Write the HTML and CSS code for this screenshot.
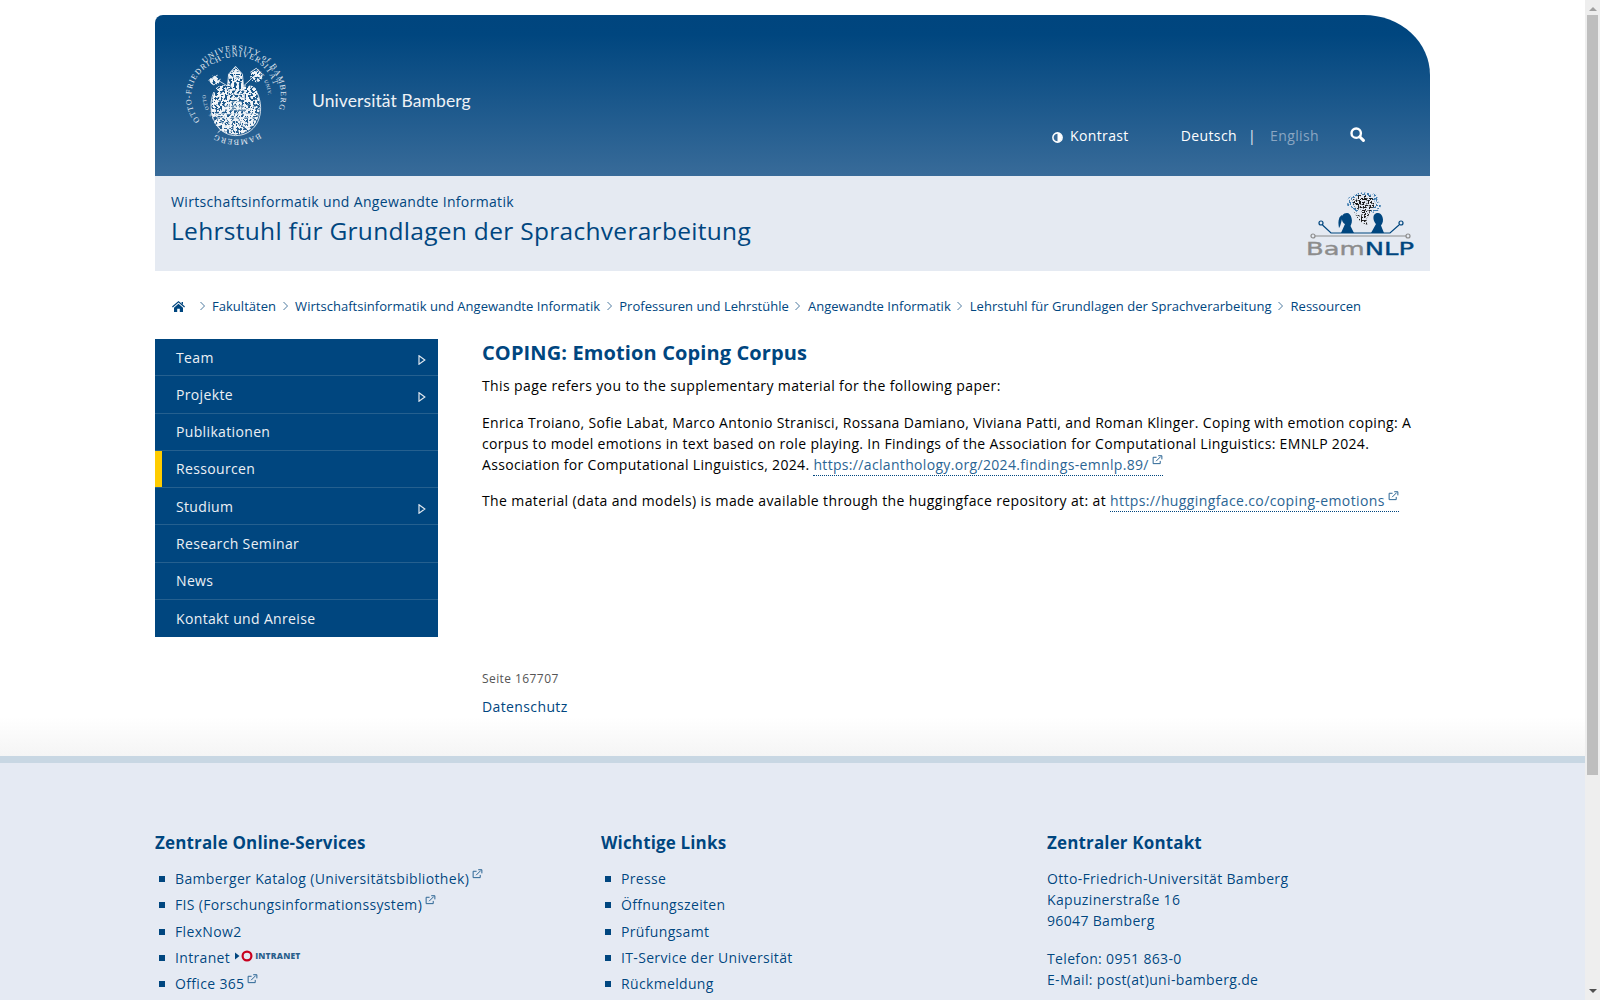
FILE: index.html
```html
<!DOCTYPE html>
<html lang="de">
<head>
<meta charset="utf-8">
<title>COPING: Emotion Coping Corpus</title>
<link rel="stylesheet" href="styles.css">
</head>
<body>
<svg class="defs" width="0" height="0" aria-hidden="true">
  <defs>
    <filter id="engrave" x="0" y="0" width="100%" height="100%">
      <feTurbulence type="fractalNoise" baseFrequency=".42" numOctaves="2" seed="4" result="n"/>
      <feColorMatrix in="n" type="matrix" values="0 0 0 0 0  0 0 0 0 0  0 0 0 0 0  0 0 0 -14 7.800" result="m"/>
      <feComposite in="SourceGraphic" in2="m" operator="in"/>
    </filter>
    <filter id="speckle" x="0" y="0" width="100%" height="100%">
      <feTurbulence type="fractalNoise" baseFrequency=".6" numOctaves="1" seed="9" result="n"/>
      <feColorMatrix in="n" type="matrix" values="0 0 0 0 0  0 0 0 0 0  0 0 0 0 0  0 0 0 -16 8" result="m"/>
      <feComposite in="SourceGraphic" in2="m" operator="in"/>
    </filter>
  </defs>
  <symbol id="ext" viewBox="0 0 12 11">
    <path d="M9 6.500V9.500H1.200V2.500H5" fill="none" stroke="currentColor" stroke-width="1.100"/>
    <path d="M4.500 6.800 9.600 1.700M6.800 .8H10.800V4.800" fill="none" stroke="currentColor" stroke-width="1.100"/>
  </symbol>
  <symbol id="chev" viewBox="0 0 7 10">
    <path d="M1.500 1 5.500 5 1.500 9" fill="none" stroke="currentColor" stroke-width="1"/>
  </symbol>
  <symbol id="tri" viewBox="0 0 8 10">
    <path d="M1 .8 6.800 5 1 9.200Z" fill="none" stroke="currentColor" stroke-width="1.200"/>
  </symbol>
</svg>
<div class="viewport">
  <div class="page">
    <div class="wrap">
      <header class="masthead">
        <a class="brand" href="#">
          <svg class="seal" viewBox="0 0 102 102" role="img" aria-label="Siegel">
            <defs>
              <path id="ringUni" d="M19.200 19.200A45 45 0 0 1 85.500 79.900"/>
              <path id="ringOtto" d="M14.100 76.800A36 36 0 0 1 32 18.100A37 37 0 0 1 83 69.500"/>
              <path id="ringBam" d="M76.800 87.900A45 45 0 0 1 25.200 87.900"/>
              <path id="ringSotto" d="M27 71A31 31 0 0 1 24 36"/>
              <path id="ringPat" d="M70 27A30 30 0 0 1 79 66"/>
            </defs>
            <text class="seal-t"><textPath href="#ringUni">UNIVERSITY of BAMBERG</textPath></text>
            <text class="seal-t seal-t2"><textPath href="#ringOtto">OTTO-FRIEDRICH-UNIVERSITÄT</textPath></text>
            <text class="seal-t"><textPath href="#ringBam" startOffset="6%">BAMBERG</textPath></text>
            <text class="seal-s"><textPath href="#ringSotto">S. OTTO</textPath></text>
            <text class="seal-s"><textPath href="#ringPat">PAT. UNIV.</textPath></text>
            <g transform="translate(-1 4)">
              <g class="arms-fill" filter="url(#engrave)">
                <path d="M30 44C30 37 40 36 43 38L44 26 51 19 58 26 59 38C64 36 74 38 73 46 77 54 76 66 72 74 67 83 58 87 51 87 42 87 33 83 29 74 25 65 26 52 30 44Z"/>
                <circle cx="30" cy="32" r="5"/><circle cx="72" cy="28" r="6"/>
              </g>
              <g class="arms-line">
                <path d="M43 38 44 26 51 18 58 26 59 38M45 29H57M47 24 55 24"/>
                <path d="M43 38 30 30M59 38 72 26M33 27 24 32 29 37 36 31M66 24 72 20 78 26 73 33"/>
                <path d="M29 44C24 56 26 70 33 79 39 86 46 88 51 88 60 88 68 84 73 75 78 65 77 54 73 45"/>
                <path d="M30 66H74M32 70H72M51 70V87M33 71 50 86M50 71 33 85M39 70 50 80"/>
                <path d="M55 75Q58 72 61 75T67 75T72 73M54 79Q57 76 60 79T66 79T70 78"/>
                <path d="M44 42H60V60H44ZM47 46H57M47 50H57M47 54H57M40 58 64 58M38 62H66"/>
              </g>
            </g>
          </svg>
          <span class="brand-name">Universität Bamberg</span>
        </a>
        <nav class="tools">
          <a class="kontrast" href="#">
            <svg class="contrast-icon" viewBox="0 0 10 10"><circle cx="5" cy="5" r="4.200" fill="#386b99" stroke="#fff" stroke-width="1.400"/><path d="M5 1A4 4 0 0 1 5 9Z" fill="#fff"/></svg>
            Kontrast
          </a>
          <a class="lang" href="#">Deutsch</a>
          <span class="sep">|</span>
          <a class="lang lang-off" href="#">English</a>
          <svg class="search" viewBox="0 0 15 15"><circle cx="6.200" cy="6.200" r="4.700" fill="none" stroke="#fff" stroke-width="2.400"/><path d="M9.700 9.700 13.400 13.400" stroke="#fff" stroke-width="3" stroke-linecap="round"/></svg>
        </nav>
      </header>

      <div class="subhead">
        <div>
          <div class="faculty">Wirtschaftsinformatik und Angewandte Informatik</div>
          <div class="chair">Lehrstuhl für Grundlagen der Sprachverarbeitung</div>
        </div>
        <svg class="bamnlp" viewBox="0 0 106 63" role="img" aria-label="BamNLP">
          <g filter="url(#speckle)">
            <path class="cloud-blue" d="M40 6 52 0 68 2 73 14 68 22 60 18 47 20 39 14Z"/>
            <path class="cloud-dark" d="M44 8 52 2 64 5 67 13 62 20 58 30 52 30 54 20 47 16Z"/>
            <path class="cloud-dark" d="M46 20 52 24 60 32 57 33 50 27Z"/>
          </g>
          <g class="kid">
            <path d="M39 21C35 21 33 24 34 28 34.500 30 35.500 31.500 37 32L33 41H46L42.500 34C43.500 32 44.500 29 43.500 26 43 23 41 21 39 21Z"/>
            <path d="M34 23C30 25 30 31 31 36 32 35 33 31 34 27Z"/>
            <path d="M70 21C66.500 21 65 23.500 65.500 27 66 29.500 67 31 68 32L63 41H76L73 33.500C75 31 75.500 28 74.500 25 73.500 22.500 72 21 70 21Z"/>
          </g>
          <g class="trace">
            <path d="M14.500 33 23 41H82L91 33"/>
            <circle cx="13" cy="31" r="2"/><circle cx="93" cy="31" r="2"/>
          </g>
          <g class="gray-line">
            <path d="M7 44H98"/>
            <circle cx="5" cy="44" r="2"/><circle cx="100" cy="44" r="2"/>
          </g>
          <text class="logo-t" x="-2" y="62.500" textLength="108" lengthAdjust="spacingAndGlyphs"><tspan class="logo-bam">Bam</tspan><tspan class="logo-nlp">NLP</tspan></text>
        </svg>
      </div>

      <nav class="crumbs">
        <svg class="home" viewBox="0 0 13 11"><path d="M6.500 0 13 5.600 12.200 6.500 6.500 1.600.8 6.500 0 5.600ZM2 6.700 6.500 2.800 11 6.700V11H7.800V7.800H5.200V11H2ZM9.600 1H11V3.400L9.600 2.200Z" fill="currentColor"/></svg>
        <svg class="chev chev-first"><use href="#chev"/></svg><a href="#">Fakultäten</a>
        <svg class="chev"><use href="#chev"/></svg><a href="#">Wirtschaftsinformatik und Angewandte Informatik</a>
        <svg class="chev"><use href="#chev"/></svg><a href="#">Professuren und Lehrstühle</a>
        <svg class="chev"><use href="#chev"/></svg><a href="#">Angewandte Informatik</a>
        <svg class="chev"><use href="#chev"/></svg><a href="#">Lehrstuhl für Grundlagen der Sprachverarbeitung</a>
        <svg class="chev"><use href="#chev"/></svg><a href="#">Ressourcen</a>
      </nav>

      <div class="columns">
        <nav class="menu">
          <a href="#">Team<svg class="tri"><use href="#tri"/></svg></a>
          <a href="#">Projekte<svg class="tri"><use href="#tri"/></svg></a>
          <a href="#">Publikationen</a>
          <a class="current" href="#">Ressourcen</a>
          <a href="#">Studium<svg class="tri"><use href="#tri"/></svg></a>
          <a href="#">Research Seminar</a>
          <a href="#">News</a>
          <a href="#">Kontakt und Anreise</a>
        </nav>
        <main class="content">
          <h1>COPING: Emotion Coping Corpus</h1>
          <p>This page refers you to the supplementary material for the following paper:</p>
          <p class="citation">Enrica Troiano, Sofie Labat, Marco Antonio Stranisci, Rossana Damiano, Viviana Patti, and Roman Klinger. Coping with emotion coping: A corpus to model emotions in text based on role playing. In Findings of the Association for Computational Linguistics: EMNLP 2024. Association for Computational Linguistics, 2024. <a class="ext-link" href="#">https://aclanthology.org/2024.findings-emnlp.89/<svg class="ext"><use href="#ext"/></svg></a></p>
          <p>The material (data and models) is made available through the huggingface repository at: at <a class="ext-link" href="#">https://huggingface.co/coping-emotions<svg class="ext"><use href="#ext"/></svg></a></p>
          <div class="page-id">Seite 167707</div>
          <a class="privacy" href="#">Datenschutz</a>
        </main>
      </div>
    </div>

    <div class="fade"></div>
    <footer class="footer">
      <div class="footer-grid">
        <section>
          <h2>Zentrale Online-Services</h2>
          <ul>
            <li><a href="#">Bamberger Katalog (Universitätsbibliothek)<svg class="ext"><use href="#ext"/></svg></a></li>
            <li><a href="#">FIS (Forschungsinformationssystem)<svg class="ext"><use href="#ext"/></svg></a></li>
            <li><a href="#">FlexNow2</a></li>
            <li><a href="#">Intranet<span class="intranet"><svg class="intranet-mark" viewBox="0 0 18 12"><path d="M0 2.500 4.500 6 0 9.500Z" fill="#00467f"/><circle cx="12" cy="6" r="4.400" fill="none" stroke="#c8001e" stroke-width="2.200"/></svg><span class="intranet-word">INTRANET</span></span></a></li>
            <li><a href="#">Office 365<svg class="ext"><use href="#ext"/></svg></a></li>
          </ul>
        </section>
        <section>
          <h2>Wichtige Links</h2>
          <ul>
            <li><a href="#">Presse</a></li>
            <li><a href="#">Öffnungszeiten</a></li>
            <li><a href="#">Prüfungsamt</a></li>
            <li><a href="#">IT-Service der Universität</a></li>
            <li><a href="#">Rückmeldung</a></li>
          </ul>
        </section>
        <section>
          <h2>Zentraler Kontakt</h2>
          <p>Otto-Friedrich-Universität Bamberg<br>Kapuzinerstraße 16<br>96047 Bamberg</p>
          <p>Telefon: 0951 863-0<br>E-Mail: post(at)uni-bamberg.de</p>
        </section>
      </div>
    </footer>
  </div>

  <aside class="scrollbar" aria-hidden="true">
    <span class="arrow-up"></span>
    <span class="thumb"></span>
    <span class="arrow-down"></span>
  </aside>
</div>
</body>
</html>
```
FILE: styles.css
```css
* { box-sizing: border-box; }
html, body { margin: 0; height: 100%; overflow: hidden; }
body {
  font-family: "Open Sans", "Liberation Sans", sans-serif;
  font-size: 14px;
  line-height: 21px;
  letter-spacing: .38px;
  color: #000;
  background: #fff;
}
a { color: #00467f; text-decoration: none; }
.defs { position: absolute; }

.viewport { display: flex; height: 100vh; }
.page { flex: 1; min-width: 0; overflow: hidden; }
.wrap { width: 1275px; margin: 0 auto; padding-top: 15px; }

/* masthead */
.masthead {
  height: 161px;
  display: flex;
  justify-content: space-between;
  background: linear-gradient(#00457e 0, #00467f 12%, #386b99 100%);
  border-radius: 8px 66px 0 0 / 8px 60px 0 0;
  padding: 29px 65px 0 31px;
}
.brand { display: flex; align-items: center; align-self: flex-start; gap: 25px; }
.seal { width: 101px; height: 102px; display: block; overflow: visible; }
.seal-t { font: 8px "Liberation Serif", serif; letter-spacing: 1.100px; fill: #e8eef4; }
.seal-t2 { letter-spacing: .9px; }
.seal-s { font: 5px "Liberation Serif", serif; letter-spacing: .5px; fill: #e8eef4; }
.arms-fill { fill: #f2f5f8; }
.arms-line { fill: none; stroke: #e8eef4; stroke-width: .9; }
.brand-name {
  font-family: Lato, "Open Sans", sans-serif;
  font-size: 17.500px;
  letter-spacing: .1px;
  color: #eef2f6;
  padding-top: 10px;
}
.tools { display: flex; align-items: center; align-self: flex-start; margin-top: 81px; color: #fff; }
.tools a { color: #fff; }
.kontrast { display: flex; align-items: center; gap: 7px; margin-right: 52px; }
.contrast-icon { width: 11px; height: 11px; margin-top: 3px; }
.sep { margin: 0 14px 0 11px; color: #e8eef4; }
.tools .lang-off { color: #8aa6c2; }
.search { width: 15px; height: 15px; margin-left: 31px; margin-top: -2px; }

/* sub header */
.subhead {
  height: 95px;
  display: flex;
  justify-content: space-between;
  background: #e5eaf2;
  padding: 15px 16px 0;
  color: #00467f;
}
.faculty { line-height: 22px; letter-spacing: .34px; }
.chair { font-size: 24.500px; line-height: 36px; letter-spacing: .3px; }
.bamnlp { width: 106px; height: 63px; margin-top: 1px; overflow: visible; }
.cloud-blue { fill: #3f7db0; }
.cloud-dark { fill: #1e1e1e; }
.kid { fill: #00467f; }
.trace { fill: none; stroke: #00467f; stroke-width: 1.200; }
.gray-line { fill: none; stroke: #8c8c8c; stroke-width: 1.200; }
.logo-t { font: 400 18px "DejaVu Sans", sans-serif; letter-spacing: 0; stroke-width: .35; }
.logo-bam { fill: #8c8c8c; stroke: #8c8c8c; }
.logo-nlp { fill: #00467f; stroke: #00467f; }

/* breadcrumbs */
.crumbs {
  display: flex;
  align-items: center;
  height: 68px;
  padding: 2px 0 0 17px;
  font-size: 13px;
  letter-spacing: .03px;
  color: #00467f;
}
.home { width: 13px; height: 11px; margin-right: 14px; }
.chev { width: 7px; height: 10px; margin: 0 6.500px 0 5.500px; color: #4d7aa0; }
.chev-first { margin-left: 0; margin-right: 6px; }

/* columns */
.columns { display: flex; gap: 44px; height: 417px; }
.menu { width: 283px; flex: none; align-self: flex-start; background: #00467f; }
.menu a {
  display: flex;
  align-items: center;
  justify-content: space-between;
  height: 37.250px;
  padding: 0 12px 0 21px;
  color: #ecf0f5;
  letter-spacing: .35px;
  border-bottom: 1px solid #25608f;
}
.menu a:last-child { border-bottom: 0; }
.menu .current { box-shadow: inset 7px 0 0 #ffcc00; }
.tri { width: 8px; height: 10px; color: #dfe7ef; margin-top: 5px; }

.content { flex: 1; min-width: 0; }
h1 { font-size: 20px; line-height: 27px; font-weight: 700; letter-spacing: .12px; color: #00467f; margin: 0 0 9px; }
.content p { margin: 0 0 15.500px; }
.content .citation { letter-spacing: .33px; }
.ext-link { color: #2b6594; border-bottom: 1px dotted #00467f; padding-bottom: 1px; }
.ext { width: 11px; height: 10px; margin-left: 3px; vertical-align: 5px; color: #2b6594; }
.page-id { font-size: 12px; letter-spacing: .42px; color: #555; margin-top: 157px; }
.privacy { display: inline-block; margin-top: 7px; }

/* footer */
.fade { height: 39px; margin-top: -39px; position: relative; background: linear-gradient(#fff, #f5f5f5); }
.footer {
  background: #e5eaf3;
  border-top: 7px solid #c8d7e3;
  padding-top: 68px;
  min-height: 300px;
}
.footer-grid { width: 1275px; margin: 0 auto; display: grid; grid-template-columns: repeat(3, 446px); color: #00467f; text-shadow: 0 0 1px #fff; letter-spacing: .34px; }
h2 { font-size: 17px; line-height: 24px; font-weight: 700; letter-spacing: .15px; margin: 0 0 11px; }
.footer ul { list-style: none; margin: 0; padding: 0; }
.footer li { height: 26.250px; line-height: 26px; padding-left: 20px; position: relative; }
.footer li::before { content: ""; position: absolute; left: 4px; top: 10px; width: 6px; height: 6px; background: #00467f; }
.footer p { margin: 0 0 15px; padding-top: 2px; }
.footer .ext { color: #2b6594; }
.intranet { display: inline-flex; align-items: center; margin-left: 5px; vertical-align: 1px; }
.intranet-mark { width: 18px; height: 12px; }
.intranet-word { font-size: 8.500px; font-weight: 800; line-height: 12px; letter-spacing: .2px; margin-left: 2px; color: #2a5f8c; }

/* scrollbar */
.scrollbar { width: 15px; flex: none; background: #eee; position: relative; display: flex; flex-direction: column; align-items: center; }
.thumb { width: 11px; height: 760px; background: #bebebe; margin-top: 4px; }
.arrow-up, .arrow-down { width: 0; height: 0; border-left: 4px solid transparent; border-right: 4px solid transparent; }
.arrow-up { border-bottom: 4px solid #a0a0a0; margin-top: 7px; }
.arrow-down { border-top: 4px solid #505050; margin-top: auto; margin-bottom: 7px; }
```
